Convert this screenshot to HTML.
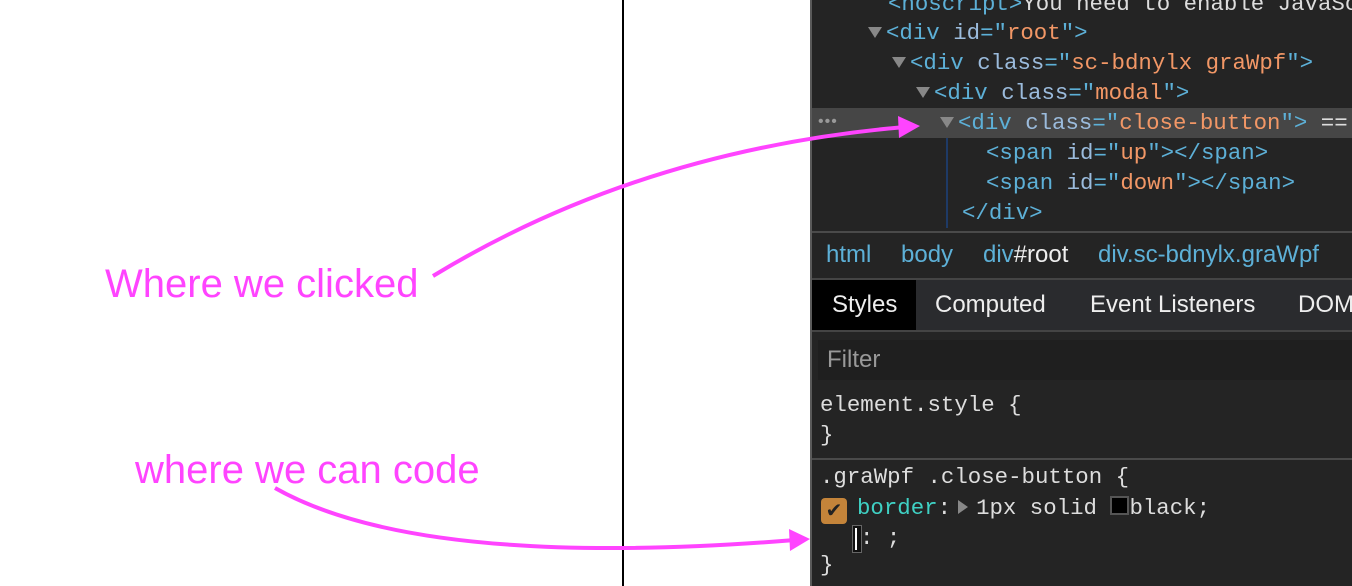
<!DOCTYPE html>
<html><head><style>
body{margin:0;width:1352px;height:586px;background:#fff;position:relative;overflow:hidden;font-family:"Liberation Sans",sans-serif}
.vl{position:absolute;left:622px;top:0;width:2px;height:586px;background:#000}
.p{position:absolute;left:810px;top:0;width:542px;height:586px;background:#242424;border-left:2px solid #5a5a5a;box-sizing:border-box}
.m{font-family:"Liberation Mono",monospace;font-size:22.4px;position:absolute;white-space:pre;line-height:30px}
.t{color:#5db0d7}.a{color:#9bbbdc}.v{color:#f29766}.w{color:#ddd}
.tri{display:inline-block;width:0;height:0;border-left:7px solid transparent;border-right:7px solid transparent;border-top:11px solid #888;margin-right:4px;vertical-align:1px}
.lbl{position:absolute;color:#ff44ff;font-size:40px}
.bc{position:absolute;top:241px;font-size:24px;color:#5db0d7}
.tb{position:absolute;top:291px;font-size:24px;color:#eee}
</style></head><body>
<div class="vl"></div>
<div class="lbl" style="left:105px;top:262px">Where we clicked</div>
<div class="lbl" style="left:135px;top:448px">where we can code</div>
<div class="p">
 <div style="position:absolute;left:0;top:108px;width:540px;height:30px;background:#464646"></div>
 <div style="position:absolute;left:6px;top:113px;color:#999;font-size:16px;letter-spacing:1px">•••</div>
 <div style="position:absolute;left:134px;top:138px;width:2px;height:90px;background:#1e3a66"></div>
 <div class="m" style="left:76px;top:-11px"><span class="t">&lt;noscript&gt;</span><span class="w">You need to enable JavaScript</span></div>
 <div class="m" style="left:56px;top:18px"><span class="tri"></span><span class="t">&lt;div </span><span class="a">id</span><span class="t">="</span><span class="v">root</span><span class="t">"&gt;</span></div>
 <div class="m" style="left:80px;top:48px"><span class="tri"></span><span class="t">&lt;div </span><span class="a">class</span><span class="t">="</span><span class="v">sc-bdnylx graWpf</span><span class="t">"&gt;</span></div>
 <div class="m" style="left:104px;top:78px"><span class="tri"></span><span class="t">&lt;div </span><span class="a">class</span><span class="t">="</span><span class="v">modal</span><span class="t">"&gt;</span></div>
 <div class="m" style="left:128px;top:108px"><span class="tri"></span><span class="t">&lt;div </span><span class="a">class</span><span class="t">="</span><span class="v">close-button</span><span class="t">"&gt;</span><span class="w"> == $0</span></div>
 <div class="m" style="left:174px;top:138px"><span class="t">&lt;span </span><span class="a">id</span><span class="t">="</span><span class="v">up</span><span class="t">"&gt;&lt;/span&gt;</span></div>
 <div class="m" style="left:174px;top:168px"><span class="t">&lt;span </span><span class="a">id</span><span class="t">="</span><span class="v">down</span><span class="t">"&gt;&lt;/span&gt;</span></div>
 <div class="m" style="left:150px;top:198px"><span class="t">&lt;/div&gt;</span></div>
 <div style="position:absolute;left:0;top:231px;width:540px;height:2px;background:#4a4a4a"></div>
 <div class="bc" style="left:14px">html</div>
 <div class="bc" style="left:89px">body</div>
 <div class="bc" style="left:171px">div<span style="color:#eee">#root</span></div>
 <div class="bc" style="left:286px">div.sc-bdnylx.graWpf</div>
 <div style="position:absolute;left:0;top:278px;width:540px;height:54px;background:#2a2b2e;border-top:2px solid #444;border-bottom:2px solid #444;box-sizing:border-box"></div>
 <div style="position:absolute;left:0;top:280px;width:104px;height:50px;background:#000"></div>
 <div class="tb" style="left:20px">Styles</div>
 <div class="tb" style="left:123px">Computed</div>
 <div class="tb" style="left:278px">Event Listeners</div>
 <div class="tb" style="left:486px">DOM</div>
 <div style="position:absolute;left:6px;top:340px;width:534px;height:40px;background:#1f1f1f"></div>
 <div style="position:absolute;left:15px;top:346px;font-size:24px;color:#999">Filter</div>
 <div class="m w" style="left:8px;top:390px">element.style {
}</div>
 <div style="position:absolute;left:0;top:458px;width:540px;height:2px;background:#4a4a4a"></div>
 <div class="m w" style="left:8px;top:462px">.graWpf .close-button {</div>
 <div style="position:absolute;left:9px;top:498px;width:26px;height:26px;background:#c4843a;border-radius:4px;color:#222;font-size:20px;text-align:center;line-height:26px">✔</div>
 <div class="m" style="left:45px;top:493px"><span style="color:#3fd1c4">border</span><span class="w">:</span><span style="display:inline-block;width:0;height:0;border-top:7px solid transparent;border-bottom:7px solid transparent;border-left:10px solid #888;margin:0 8px 0 7px"></span><span class="w">1px solid </span><span style="display:inline-block;width:15px;height:15px;background:#000;border:2px solid #555;vertical-align:-1px"></span><span class="w">black;</span></div>
 <div style="position:absolute;left:40px;top:525px;width:8px;height:26px;border:1px solid #666;background:#111"><div style="margin:2px 2px;width:2px;height:22px;background:#fff"></div></div>
 <div class="m w" style="left:48px;top:523px">: ;</div>
 <div class="m w" style="left:8px;top:550px">}</div>
</div>
<svg width="1352" height="586" style="position:absolute;left:0;top:0">
 <path d="M433 276 Q640 150 905 127" stroke="#ff44ff" stroke-width="4" fill="none"/>
 <polygon points="920,126 898,116 899,138" fill="#ff44ff"/>
 <path d="M275 488 Q420 570 795 540" stroke="#ff44ff" stroke-width="4" fill="none"/>
 <polygon points="810,539 789,529 790,551" fill="#ff44ff"/>
</svg>
</body></html>
